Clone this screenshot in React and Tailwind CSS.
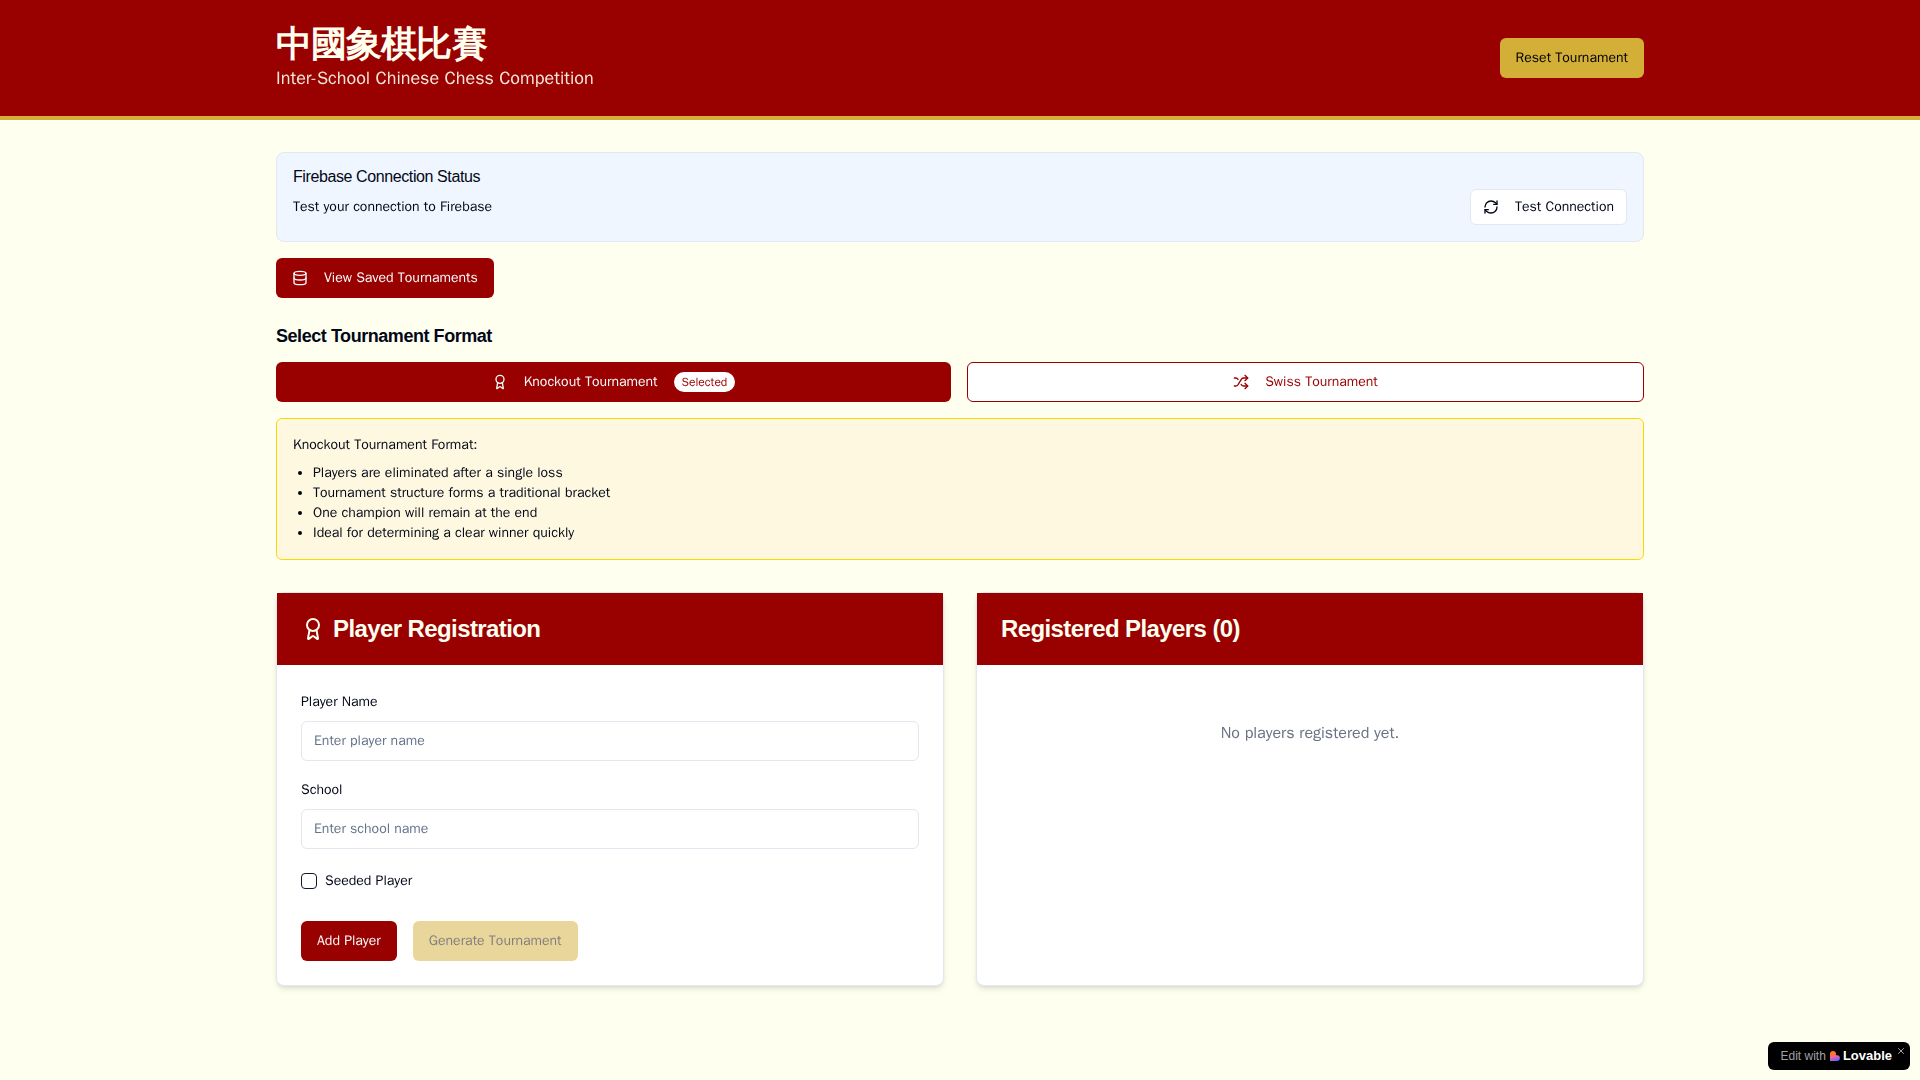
import React from "react";
import { Award, Database, RefreshCw, Shuffle, X } from "lucide-react";

const heading = 'font-["Liberation_Sans",sans-serif] tracking-tight';
const buttonBase = "inline-flex items-center justify-center gap-2 rounded-md text-sm font-medium whitespace-nowrap";
const field =
  "h-10 w-full rounded-md border border-[#e2e8f0] bg-white px-3 py-2 text-sm placeholder:text-[#64748b]";

function Header() {
  return (
    <header className="border-b-4 border-[#d4af37] bg-[#990000] text-[#fffff0]">
      <div className="mx-auto flex max-w-[1400px] items-center justify-between px-4 py-6">
        <div>
          <h1 lang="zh-Hant" className={heading + " text-4xl font-bold"}>中國象棋比賽</h1>
          <p className="text-lg opacity-90">Inter-School Chinese Chess Competition</p>
        </div>
        <button type="button" className={buttonBase + " h-10 bg-[#d4af37] px-4 text-black"}>
          Reset Tournament
        </button>
      </div>
    </header>
  );
}

function ConnectionStatus() {
  return (
    <section className="rounded-lg border border-[#e2e8f0] bg-[#eff6ff] p-4">
      <h5 className={heading + " mb-1 text-base leading-none font-medium"}>Firebase Connection Status</h5>
      <div className="flex items-center justify-between">
        <span className="text-sm">Test your connection to Firebase</span>
        <button type="button" className={buttonBase + " h-9 border border-[#e2e8f0] bg-white px-3"}>
          <RefreshCw className="mr-2 size-4" />
          Test Connection
        </button>
      </div>
    </section>
  );
}

function FormatPicker() {
  return (
    <section className="mt-6">
      <h2 className={heading + " mb-3 text-lg font-semibold"}>Select Tournament Format</h2>
      <div className="flex gap-4">
        <button type="button" aria-pressed="true" className={buttonBase + " h-10 flex-1 bg-[#990000] px-4 text-[#f8fafc]"}>
          <Award className="mr-2 size-4" />
          Knockout Tournament
          <span className="ml-2 rounded-full bg-white px-2 py-0.5 text-xs text-[#990000]">Selected</span>
        </button>
        <button
          type="button"
          aria-pressed="false"
          className={buttonBase + " h-10 flex-1 border border-[#990000] bg-white px-4 text-[#990000]"}
        >
          <Shuffle className="mr-2 size-4" />
          Swiss Tournament
        </button>
      </div>
      <div className="mt-4 rounded-md border border-[#ffd700] bg-[#fff8e1] p-4 text-sm">
        <p className="mb-2 font-medium">Knockout Tournament Format:</p>
        <ul className="list-disc pl-5">
          <li>Players are eliminated after a single loss</li>
          <li>Tournament structure forms a traditional bracket</li>
          <li>One champion will remain at the end</li>
          <li>Ideal for determining a clear winner quickly</li>
        </ul>
      </div>
    </section>
  );
}

function Card({ title, icon, children }) {
  return (
    <section className="rounded-lg border border-[#e2e8f0] bg-white shadow-md">
      <div className="bg-[#990000] p-6 text-[#fffff0]">
        <h3 className={heading + " flex items-center gap-2 text-2xl leading-none font-semibold"}>
          {icon}
          {title}
        </h3>
      </div>
      <div className="p-6">{children}</div>
    </section>
  );
}

function TextField({ id, label, placeholder }) {
  return (
    <div>
      <div className="mb-2">
        <label htmlFor={id} className="text-sm leading-none font-medium">
          {label}
        </label>
      </div>
      <input id={id} type="text" placeholder={placeholder} className={field} />
    </div>
  );
}

function RegistrationForm() {
  return (
    <form className="space-y-4">
      <TextField id="player-name" label="Player Name" placeholder="Enter player name" />
      <TextField id="school" label="School" placeholder="Enter school name" />
      <div className="flex items-center gap-2 pt-2">
        <input id="seeded" type="checkbox" className="size-4 appearance-none rounded-sm border border-[#0f172a] checked:bg-[#0f172a]" />
        <label htmlFor="seeded" className="text-sm leading-none font-medium">
          Seeded Player
        </label>
      </div>
      <div className="flex gap-4 pt-4">
        <button type="submit" className={buttonBase + " h-10 bg-[#990000] px-4 text-[#f8fafc]"}>
          Add Player
        </button>
        <button type="button" disabled className={buttonBase + " h-10 bg-[#d4af37] px-4 text-black opacity-50"}>
          Generate Tournament
        </button>
      </div>
    </form>
  );
}

function LovableBadge() {
  return (
    <aside className='fixed right-2.5 bottom-2.5 flex h-7 items-center rounded-md bg-black pr-[18px] pl-[13px] font-["Liberation_Sans",sans-serif] text-xs'>
      <a href="#edit" className="flex items-center gap-1">
        <span className="text-[#a1a1aa]">Edit with</span>
        <span className="flex items-center gap-[3px]">
          <svg viewBox="0 0 24 24" className="size-[10px]" aria-hidden="true">
            <defs>
              <linearGradient id="heart" x1="0.3" y1="0" x2="0.6" y2="1">
                <stop offset="0.2" stopColor="#ff7a1a" />
                <stop offset="0.55" stopColor="#ff5f9e" />
                <stop offset="0.95" stopColor="#5b6cff" />
              </linearGradient>
            </defs>
            <path d="M7.2 0a7.2 7.2 0 0 1 7.2 7.2V10h2.4a7 7 0 0 1 0 14H0V7.2A7.2 7.2 0 0 1 7.2 0Z" fill="url(#heart)" />
          </svg>
          <span className="text-[13px] font-bold text-white">Lovable</span>
        </span>
      </a>
      <button type="button" aria-label="Close" className="absolute top-1 right-1 text-[#c4c4c8]">
        <X className="size-2.5" />
      </button>
    </aside>
  );
}

export default function App() {
  return (
    <div className='min-h-screen bg-[#fffff0] font-["WenQuanYi_Zen_Hei","Noto_Sans_CJK_TC",sans-serif] text-[#020817]'>
      <Header />
      <main className="mx-auto max-w-[1400px] px-4 py-8">
        <ConnectionStatus />
        <button type="button" className={buttonBase + " mt-4 h-10 bg-[#990000] px-4 text-[#f8fafc]"}>
          <Database className="mr-2 size-4" />
          View Saved Tournaments
        </button>
        <FormatPicker />
        <div className="mt-8 grid grid-cols-2 gap-8">
          <Card title="Player Registration" icon={<Award className="size-6" />}>
            <RegistrationForm />
          </Card>
          <Card title="Registered Players (0)">
            <p className="py-8 text-center text-gray-500">No players registered yet.</p>
          </Card>
        </div>
      </main>
      <LovableBadge />
    </div>
  );
}
